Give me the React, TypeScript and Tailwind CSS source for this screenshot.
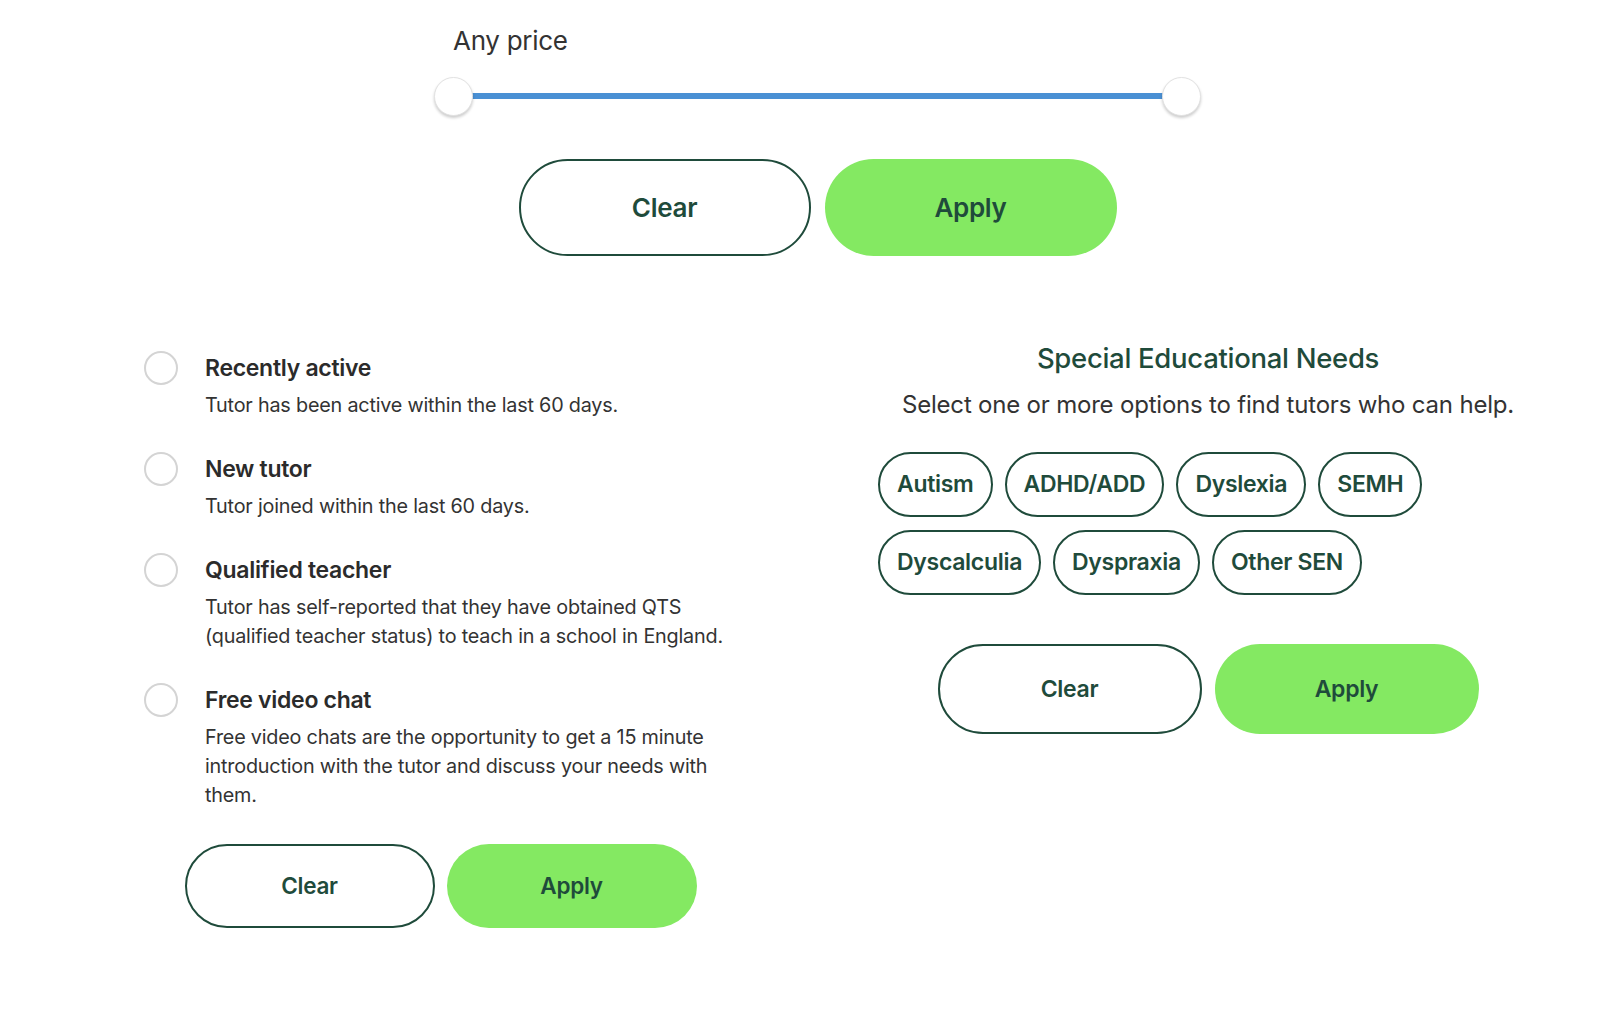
import React from "react";

const font = { fontFamily: "Inter, 'Noto Sans', sans-serif" };

const options = [
  { title: "Recently active", desc: "Tutor has been active within the last 60 days." },
  { title: "New tutor", desc: "Tutor joined within the last 60 days." },
  {
    title: "Qualified teacher",
    desc: "Tutor has self-reported that they have obtained QTS (qualified teacher status) to teach in a school in England.",
  },
  {
    title: "Free video chat",
    desc: "Free video chats are the opportunity to get a 15 minute introduction with the tutor and discuss your needs with them.",
  },
];

const needs = ["Autism", "ADHD/ADD", "Dyslexia", "SEMH", "Dyscalculia", "Dyspraxia", "Other SEN"];

const Actions = ({ w, h, text, gap }: { w: string; h: string; text: string; gap: string }) => (
  <div className={`flex justify-center ${gap}`}>
    <button className={`${w} ${h} ${text} rounded-full border-2 border-[#1f4b3b] bg-white font-semibold text-[#1f4b3b]`}>
      Clear
    </button>
    <button className={`${w} ${h} ${text} rounded-full bg-[#84e962] font-semibold text-[#1f4b3b]`}>
      Apply
    </button>
  </div>
);

export default function App() {
  return (
    <div className="min-h-[1016px] w-[1600px] overflow-hidden bg-white" style={font}>
      {/* Price slider */}
      <div className="ml-[453px] w-[729px] pt-[23px]">
        <div className="text-[26px] leading-[36px] tracking-[-0.3px] text-[#333]">Any price</div>
        <div className="relative mt-[34px] h-[6px] bg-[#4a90d4]">
          <div className="absolute left-[-19px] top-[-16px] h-[39px] w-[39px] rounded-full border border-[#e2e2e2] bg-white shadow-[0_2px_3px_rgba(0,0,0,0.2)]" />
          <div className="absolute right-[-19px] top-[-16px] h-[39px] w-[39px] rounded-full border border-[#e2e2e2] bg-white shadow-[0_2px_3px_rgba(0,0,0,0.2)]" />
        </div>
        <div className="mt-[60px]">
          <Actions w="w-[292px]" h="h-[97px]" text="text-[26px] tracking-[-0.3px]" gap="gap-[14px]" />
        </div>
      </div>

      <div className="mt-[84px] flex items-start">
        {/* Left: options */}
        <div className="ml-[144px] w-[593px] pt-[11px]">
          <div className="flex flex-col gap-[32px]">
            {options.map((o) => (
              <div key={o.title} className="flex gap-[27px]">
                <div className="h-[34px] w-[34px] shrink-0 rounded-full border-2 border-[#d4d4d4] bg-white" />
                <div>
                  <div className="text-[23px] leading-[34px] font-semibold tracking-[-0.3px] text-[#2b2b2b]">{o.title}</div>
                  <div className="mt-[6px] text-[19.8px] leading-[29px] tracking-[-0.2px] text-[#333]">{o.desc}</div>
                </div>
              </div>
            ))}
          </div>
          <div className="mt-[34px]">
            <Actions w="w-[250px]" h="h-[84px]" text="text-[22.5px] tracking-[-0.3px]" gap="gap-[12px]" />
          </div>
        </div>

        {/* Right: special educational needs */}
        <div className="ml-[141px] w-[660px]">
          <h2 className="text-center text-[27.5px] leading-[36px] font-medium tracking-[-0.3px] text-[#1f4b3b]">
            Special Educational Needs
          </h2>
          <p className="mt-[13px] text-center text-[24px] leading-[32px] tracking-[-0.2px] text-[#333]">
            Select one or more options to find tutors who can help.
          </p>
          <div className="mt-[31px] flex flex-wrap gap-x-[12px] gap-y-[13px]">
            {needs.map((n) => (
              <span
                key={n}
                className="flex h-[65px] items-center rounded-full border-2 border-[#1f4b3b] px-[17px] text-[23px] font-semibold tracking-[-0.3px] text-[#1f4b3b]"
              >
                {n}
              </span>
            ))}
          </div>
          <div className="mt-[49px]">
            <Actions w="w-[264px]" h="h-[90px]" text="text-[23px] tracking-[-0.3px]" gap="gap-[13px]" />
          </div>
        </div>
      </div>
    </div>
  );
}
